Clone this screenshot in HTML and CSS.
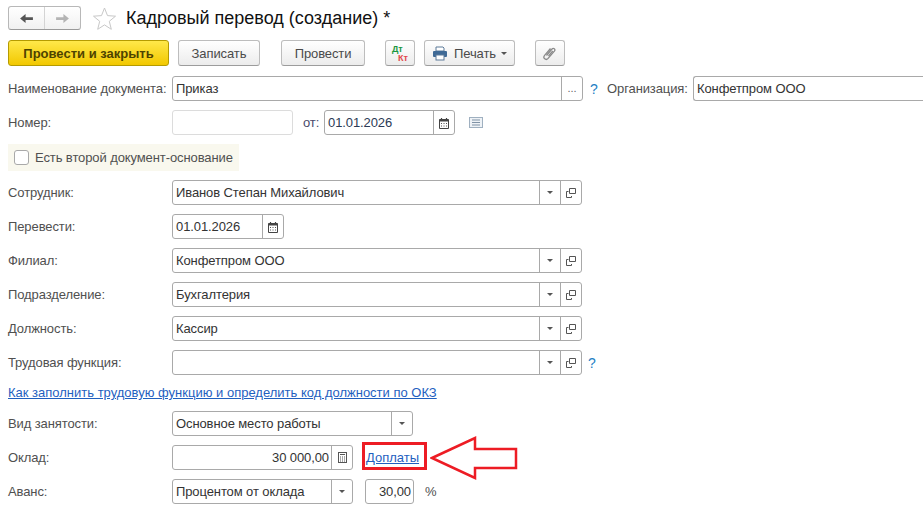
FILE: index.html
```html
<!DOCTYPE html>
<html lang="ru">
<head>
<meta charset="utf-8">
<title>Кадровый перевод (создание)</title>
<link rel="stylesheet" href="styles.css">
</head>
<body>
<div class="page">
  <header class="titlebar">
    <div class="nav">
      <span class="nav-btn"><svg width="15" height="11" viewBox="0 0 16 12"><path d="M1 6l6-5v3.500h8v3H7V11z" fill="#555"/></svg></span>
      <span class="nav-btn"><svg width="15" height="11" viewBox="0 0 16 12"><path d="M15 6L9 1v3.500H1v3h8V11z" fill="#b4b4b4"/></svg></span>
    </div>
    <svg class="star" width="25" height="25" viewBox="0 0 25 25"><path d="M12.500 2l3 7.600 8 .6-6.200 5.100 2 8-6.800-4.400-6.800 4.400 2-8L1.500 10.200l8-.6z" fill="#fff" stroke="#c8c8c8"/></svg>
    <h1 class="title">Кадровый перевод (создание) *</h1>
  </header>

  <div class="toolbar">
    <button class="btn primary">Провести и закрыть</button>
    <button class="btn w-save">Записать</button>
    <button class="btn w-post">Провести</button>
    <button class="btn w-dtkt"><span class="dt">Дт</span><span class="kt">Кт</span></button>
    <button class="btn w-print">
      <svg width="16" height="15" viewBox="0 0 16 15"><path d="M4 1h7l1 1v3H4z" fill="#fff" stroke="#5d7a99"/><rect x="1" y="5" width="14" height="6" rx="1" fill="#3f6a96"/><rect x="4" y="9" width="8" height="5" fill="#fff" stroke="#5d7a99"/></svg>
      <span>Печать</span><i class="caret small"></i>
    </button>
    <button class="btn w-clip">
      <svg width="14" height="15" viewBox="0 0 14 15"><path d="M3.500 9.500l5.500-6.500c1.500-1.600 3.800.4 2.400 2.100l-6.300 7.300c-2.300 2.500-5.700-.4-3.500-3L7.500 2.500" fill="none" stroke="#8a8a8a" stroke-width="1.300"/><path d="M5.500 10l4.300-5" fill="none" stroke="#8a8a8a" stroke-width="1.300"/></svg>
    </button>
  </div>

  <main class="form">
    <div class="row">
      <label class="lbl">Наименование документа:</label>
      <div class="field w-name"><span class="val">Приказ</span><span class="seg dots">...</span></div>
      <span class="help help-a">?</span>
      <label class="lbl-inline">Организация:</label>
      <div class="field w-org"><span class="val">Конфетпром ООО</span></div>
    </div>
    <div class="row">
      <label class="lbl">Номер:</label>
      <div class="field w-num light"></div>
      <label class="lbl-ot">от:</label>
      <div class="field w-date2"><span class="val navy">01.01.2026</span><span class="seg"><svg width="10" height="12" viewBox="0 0 10 12"><use href="#i-cal"/></svg></span></div>
      <svg class="note" width="14" height="11" viewBox="0 0 14 11"><rect x=".5" y=".5" width="13" height="10" fill="#eef2f6" stroke="#9fb0c0"/><path d="M3 3h8M3 5.500h8M3 8h8" stroke="#8093a6"/></svg>
    </div>
    <div class="band">
      <span class="check"></span><span class="band-text">Есть второй документ-основание</span>
    </div>
    <div class="row">
      <label class="lbl">Сотрудник:</label>
      <div class="field w-wide"><span class="val">Иванов Степан Михайлович</span><span class="seg s21"><i class="caret"></i></span><span class="seg s21"><svg width="10" height="10" viewBox="0 0 10 10"><use href="#i-open"/></svg></span></div>
    </div>
    <div class="row">
      <label class="lbl">Перевести:</label>
      <div class="field w-date"><span class="val">01.01.2026</span><span class="seg s21"><svg width="10" height="12" viewBox="0 0 10 12"><use href="#i-cal"/></svg></span></div>
    </div>
    <div class="row">
      <label class="lbl">Филиал:</label>
      <div class="field w-wide"><span class="val">Конфетпром ООО</span><span class="seg s21"><i class="caret"></i></span><span class="seg s21"><svg width="10" height="10" viewBox="0 0 10 10"><use href="#i-open"/></svg></span></div>
    </div>
    <div class="row">
      <label class="lbl">Подразделение:</label>
      <div class="field w-wide"><span class="val">Бухгалтерия</span><span class="seg s21"><i class="caret"></i></span><span class="seg s21"><svg width="10" height="10" viewBox="0 0 10 10"><use href="#i-open"/></svg></span></div>
    </div>
    <div class="row">
      <label class="lbl">Должность:</label>
      <div class="field w-wide"><span class="val">Кассир</span><span class="seg s21"><i class="caret"></i></span><span class="seg s21"><svg width="10" height="10" viewBox="0 0 10 10"><use href="#i-open"/></svg></span></div>
    </div>
    <div class="row">
      <label class="lbl">Трудовая функция:</label>
      <div class="field w-wide"><span class="val"></span><span class="seg s21"><i class="caret"></i></span><span class="seg s21"><svg width="10" height="10" viewBox="0 0 10 10"><use href="#i-open"/></svg></span></div>
      <span class="help help-b">?</span>
    </div>
    <div class="linkrow"><a class="link" href="#">Как заполнить трудовую функцию и определить код должности по ОКЗ</a></div>
    <div class="row">
      <label class="lbl">Вид занятости:</label>
      <div class="field w-kind"><span class="val">Основное место работы</span><span class="seg s21"><i class="caret"></i></span></div>
    </div>
    <div class="row salary">
      <label class="lbl">Оклад:</label>
      <div class="field w-money"><span class="val right">30 000,00</span><span class="seg s21"><svg width="9" height="11" viewBox="0 0 9 11"><rect x=".5" y=".5" width="8" height="10" fill="none" stroke="#555"/><path d="M2 2.500h5" stroke="#555"/><path d="M2 5h1M4 5h1M6 5h1M2 7h1M4 7h1M6 7h1M2 9h1M4 9h1M6 9h1" stroke="#555"/></svg></span></div>
      <a class="link extra" href="#">Доплаты</a>
      <span class="redbox"></span>
      <svg class="arrow" width="90" height="46" viewBox="0 0 90 46"><path d="M2 23L45 3v11h41v19H45v10z" fill="#fff" stroke="#ed1c24" stroke-width="2.500"/></svg>
    </div>
    <div class="row">
      <label class="lbl">Аванс:</label>
      <div class="field w-money"><span class="val">Процентом от оклада</span><span class="seg s21"><i class="caret"></i></span></div>
      <div class="field w-pct"><span class="val right">30,00</span></div>
      <span class="pct">%</span>
    </div>
  </main>
</div>

<svg class="defs" width="0" height="0">
  <defs>
    <symbol id="i-cal" viewBox="0 0 10 12"><path d="M.5 2.500h9v9h-9z" fill="#fff" stroke="#444"/><path d="M.5 2.500h9v2h-9z" fill="#444"/><path d="M2.500 1v2M7.500 1v2" stroke="#444" stroke-width="1.200"/><path d="M2 6.500h1M4.500 6.500h1M7 6.500h1M2 9h1M4.500 9h1M7 9h1" stroke="#555"/></symbol>
    <symbol id="i-open" viewBox="0 0 10 10"><path d="M3.500.5h6v5h-6z" fill="none" stroke="#555"/><path d="M2.500 3.500H.5v6h5V8" fill="none" stroke="#555"/></symbol>
  </defs>
</svg>
</body>
</html>
```
FILE: styles.css
```css
* { box-sizing: border-box; }
html, body { margin: 0; padding: 0; background: #fff; overflow: hidden; }
body { font: 13px/16px "Liberation Sans", Arial, sans-serif; letter-spacing: -.1px; color: #505050; }
.page { width: 923px; height: 514px; overflow: hidden; padding: 6px 0 0 8px; }
.defs { position: absolute; }

.titlebar { display: flex; align-items: center; height: 24px; }
.nav { display: flex; width: 73px; height: 24px; border: 1px solid #b8b8b8; border-bottom-color: #9a9a9a; border-radius: 3px; background: linear-gradient(#fff, #f1f1f1); }
.nav-btn { flex: 1; display: flex; align-items: center; justify-content: center; }
.nav-btn + .nav-btn { border-left: 1px solid #d4d4d4; }
.star { margin-left: 11px; flex: none; }
.title { margin: 0 0 0 9px; font-size: 18px; line-height: 24px; font-weight: 400; letter-spacing: 0; color: #111; white-space: nowrap; }

.toolbar { display: flex; height: 26px; margin-top: 10px; }
.btn { display: flex; align-items: center; justify-content: center; height: 26px; margin: 0; padding: 0; border: 1px solid #bdbdbd; border-bottom-color: #9c9c9c; border-radius: 3px; background: linear-gradient(#fff, #ececec); font: 13px "Liberation Sans", Arial, sans-serif; letter-spacing: -.1px; color: #4a4a4a; }
.primary { width: 161px; font-weight: 700; letter-spacing: 0; color: #4e4300; border-color: #b59b00; background: linear-gradient(#ffe84a, #f2c800); }
.w-save { width: 82px; margin-left: 9px; }
.w-post { width: 84px; margin-left: 21px; }
.w-dtkt { width: 30px; margin-left: 20px; position: relative; }
.dt { position: absolute; left: 6px; top: 4px; font-size: 9px; line-height: 9px; font-weight: 700; color: #1a9641; }
.kt { position: absolute; left: 12px; top: 13px; font-size: 9px; line-height: 9px; font-weight: 700; color: #e2474b; }
.w-print { width: 91px; margin-left: 9px; gap: 6px; justify-content: flex-start; padding-left: 7px; }
.w-clip { width: 30px; margin-left: 20px; }

.caret { display: block; width: 0; height: 0; border: 3px solid transparent; border-top: 3px solid #555; border-bottom: 0; }
.caret.small { margin-left: -1px; }

.form { display: flex; flex-direction: column; gap: 9px; margin-top: 10px; }
.row { display: flex; align-items: center; height: 25px; position: relative; }
.lbl { width: 164px; flex: none; white-space: nowrap; }
.lbl-inline { margin-left: 11px; width: 86px; flex: none; white-space: nowrap; }
.lbl-ot { margin-left: 10px; width: 21px; flex: none; color: #4a4a6a; }

.field { display: flex; height: 25px; flex: none; border: 1px solid #a9a9a9; border-radius: 3px; background: #fff; color: #333; }
.val { flex: 1; min-width: 0; padding: 0 2px 0 3px; line-height: 23px; white-space: nowrap; }
.val.right { text-align: right; padding-right: 2px; }
.val.navy { color: #2b3a55; }
.seg { flex: none; width: 21px; display: flex; align-items: center; justify-content: center; border-left: 1px solid #a9a9a9; }
.dots { line-height: 23px; font-size: 11px; color: #666; }

.light { border-color: #dcdcdc; }
.w-name { width: 411px; }
.w-org { width: 240px; border-right: 0; border-radius: 3px 0 0 3px; }
.w-num { width: 121px; }
.w-date2 { width: 131px; }
.w-wide { width: 410px; }
.w-date { width: 112px; }
.w-kind { width: 241px; }
.w-money { width: 181px; }
.w-pct { width: 49px; margin-left: 12px; }
.help { color: #1f7fc4; font-size: 14px; font-weight: 400; letter-spacing: 0; }
.help-a { margin-left: 7px; width: 6px; }
.help-b { margin-left: 6px; }
.note { margin-left: 14px; }
.pct { margin-left: 11px; }

.band { display: flex; align-items: center; gap: 6px; width: 231px; height: 27px; padding-left: 6px; background: #f9f8ee; }
.check { width: 15px; height: 15px; border: 1px solid #a9a9a9; border-radius: 3px; background: #fff; }
.band-text { white-space: nowrap; }

.linkrow { height: 18px; line-height: 18px; }
.link { color: #1f5fbf; text-decoration: underline; letter-spacing: 0; }

.extra { margin-left: 13px; }
.redbox { position: absolute; left: 354px; top: -3px; width: 65px; height: 28px; border: 3px solid #ed1c24; }
.arrow { position: absolute; left: 422px; top: -10px; }
```
